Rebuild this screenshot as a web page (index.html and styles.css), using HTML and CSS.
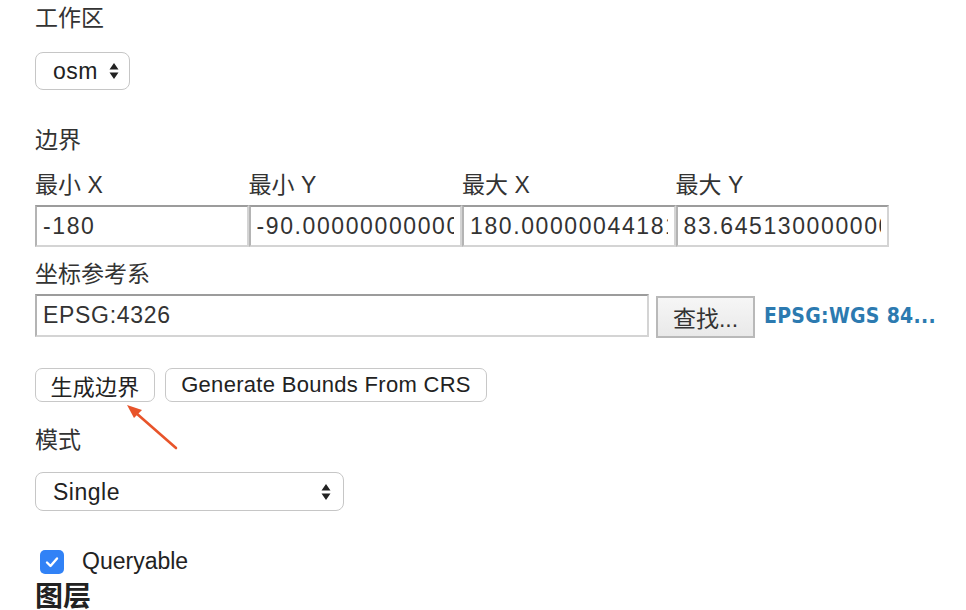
FILE: index.html
```html
<!DOCTYPE html>
<html lang="zh">
<head>
<meta charset="utf-8">
<link rel="stylesheet" href="styles.css">
</head>
<body>
<div class="page">
  <div class="label">工作区</div>
  <div class="select-wrap sel-osm">
    <select class="select"><option>osm</option></select>
    <svg class="updown" viewBox="0 0 10 18" width="10" height="18"><path d="M5 1 L9.5 7.5 H0.5 Z M5 17 L9.5 10.5 H0.5 Z" fill="#222"/></svg>
  </div>

  <div class="label sec-bounds">边界</div>
  <div class="bounds">
    <div class="col"><div class="label">最小 X</div><input class="field bound" type="text" value="-180"></div>
    <div class="col"><div class="label">最小 Y</div><input class="field bound" type="text" value="-90.00000000000001"></div>
    <div class="col"><div class="label">最大 X</div><input class="field bound" type="text" value="180.00000044181751"></div>
    <div class="col"><div class="label">最大 Y</div><input class="field bound" type="text" value="83.64513000000001"></div>
  </div>

  <div class="label sec-crs">坐标参考系</div>
  <div class="crs-row">
    <input class="field crs-field" type="text" value="EPSG:4326">
    <button class="find-btn">查找...</button>
    <a class="crs-link" href="#">EPSG:WGS 84...</a>
  </div>

  <div class="btn-row">
    <button class="btn btn-gen">生成边界</button>
    <button class="btn btn-crs">Generate Bounds From CRS</button>
  </div>

  <div class="label sec-mode">模式</div>
  <div class="select-wrap sel-mode">
    <select class="select"><option>Single</option></select>
    <svg class="updown" viewBox="0 0 10 18" width="10" height="18"><path d="M5 1 L9.5 7.5 H0.5 Z M5 17 L9.5 10.5 H0.5 Z" fill="#222"/></svg>
  </div>

  <label class="check-row">
    <span class="checkbox"><svg viewBox="0 0 24 24" width="24" height="24"><path d="M7 12.5 L10.5 16 L17 8.5" fill="none" stroke="#fff" stroke-width="2.4" stroke-linecap="round" stroke-linejoin="round"/></svg></span>
    <span class="check-text">Queryable</span>
  </label>
  <div class="heading">图层</div>
</div>
<svg class="arrow" width="966" height="610" viewBox="0 0 966 610">
  <line x1="176" y1="448" x2="136" y2="413" stroke="#e8542a" stroke-width="2.6" stroke-linecap="round"/>
  <path d="M127 405 L142 410 L134 418 Z" fill="#e8542a"/>
</svg>
</body>
</html>
```

FILE: styles.css
```css
html, body {
  margin: 0;
  padding: 0;
  background: #fff;
}
body {
  font-family: "Liberation Sans", "Noto Sans CJK SC", sans-serif;
  color: #333;
  position: relative;
  width: 966px;
  height: 610px;
  overflow: hidden;
}
.page {
  padding: 6px 0 0 35px;
}
.label {
  font-size: 23px;
  line-height: 24px;
  height: 24px;
  color: #333;
}
.select-wrap {
  position: relative;
  display: flex;
  align-items: center;
}
.select {
  appearance: none;
  -webkit-appearance: none;
  font-family: "Liberation Sans", "Noto Sans CJK SC", sans-serif;
  font-size: 23px;
  letter-spacing: 0.5px;
  color: #222;
  background: #fff;
  border: 1px solid #c6c6c6;
  border-radius: 8px;
  padding: 0 0 0 17px;
  margin: 0;
  box-sizing: border-box;
  outline: none;
}
.updown {
  position: absolute;
  top: 50%;
  margin-top: -9px;
}
.sel-osm {
  margin-top: 22px;
  width: 95px;
}
.sel-osm .select {
  width: 95px;
  height: 38px;
}
.sel-osm .updown {
  left: 74px;
}
.sec-bounds {
  margin-top: 38px;
}
.bounds {
  display: flex;
  margin-top: 21px;
}
.col {
  width: 213.5px;
  display: flex;
  flex-direction: column;
  gap: 8px;
}
.field {
  font-family: "Liberation Sans", "Noto Sans CJK SC", sans-serif;
  font-size: 23px;
  color: #333;
  box-sizing: border-box;
  height: 42px;
  width: 100%;
  padding: 0 6px;
  margin: 0;
  border: 2px solid;
  border-color: #9c9c9c #d4d4d4 #d4d4d4 #b4b4b4;
  background: #fff;
  outline: none;
}
.bound {
  letter-spacing: 1.6px;
}
.sec-crs {
  margin-top: 15px;
}
.crs-row {
  display: flex;
  align-items: center;
  margin-top: 6px;
}
.crs-field {
  width: 614px;
  height: 43px;
  letter-spacing: 0.7px;
}
.find-btn {
  margin-left: 7px;
  margin-top: 4px;
  height: 42px;
  width: 99px;
  font-family: "Liberation Sans", "Noto Sans CJK SC", sans-serif;
  font-size: 23px;
  color: #333;
  background: linear-gradient(#f6f6f6, #e9e9e9);
  border: 2px solid #b9b9b9;
  border-radius: 0;
  padding: 0;
}
.crs-link {
  margin-left: 9px;
  margin-top: 2px;
  font-family: "DejaVu Sans Condensed", "DejaVu Sans", sans-serif;
  font-size: 21px;
  font-weight: bold;
  color: #2c7ab0;
  text-decoration: none;
  letter-spacing: 0.3px;
}
.btn-row {
  display: flex;
  gap: 10px;
  margin-top: 30px;
}
.btn {
  height: 34px;
  font-family: "Liberation Sans", "Noto Sans CJK SC", sans-serif;
  font-size: 22px;
  color: #222;
  background: #fff;
  border: 1px solid #c8c8c8;
  border-radius: 7px;
  padding: 0;
  letter-spacing: 0.3px;
}
.btn-gen {
  width: 120px;
}
.btn-crs {
  width: 322px;
}
.sec-mode {
  margin-top: 26px;
}
.sel-mode {
  margin-top: 20px;
  width: 309px;
}
.sel-mode .select {
  width: 309px;
  height: 39px;
}
.sel-mode .updown {
  left: 286px;
}
.check-row {
  display: flex;
  align-items: center;
  margin-top: 38px;
  height: 25px;
}
.checkbox {
  display: block;
  width: 24px;
  height: 24px;
  margin-left: 5px;
  border-radius: 5px;
  background: #3182f6;
}
.checkbox svg {
  display: block;
}
.check-text {
  margin-left: 18px;
  font-size: 23px;
  color: #222;
}
.heading {
  margin-top: 7px;
  font-size: 28px;
  line-height: 32px;
  font-weight: bold;
  color: #222;
}
.arrow {
  position: absolute;
  left: 0;
  top: 0;
  pointer-events: none;
}
```
